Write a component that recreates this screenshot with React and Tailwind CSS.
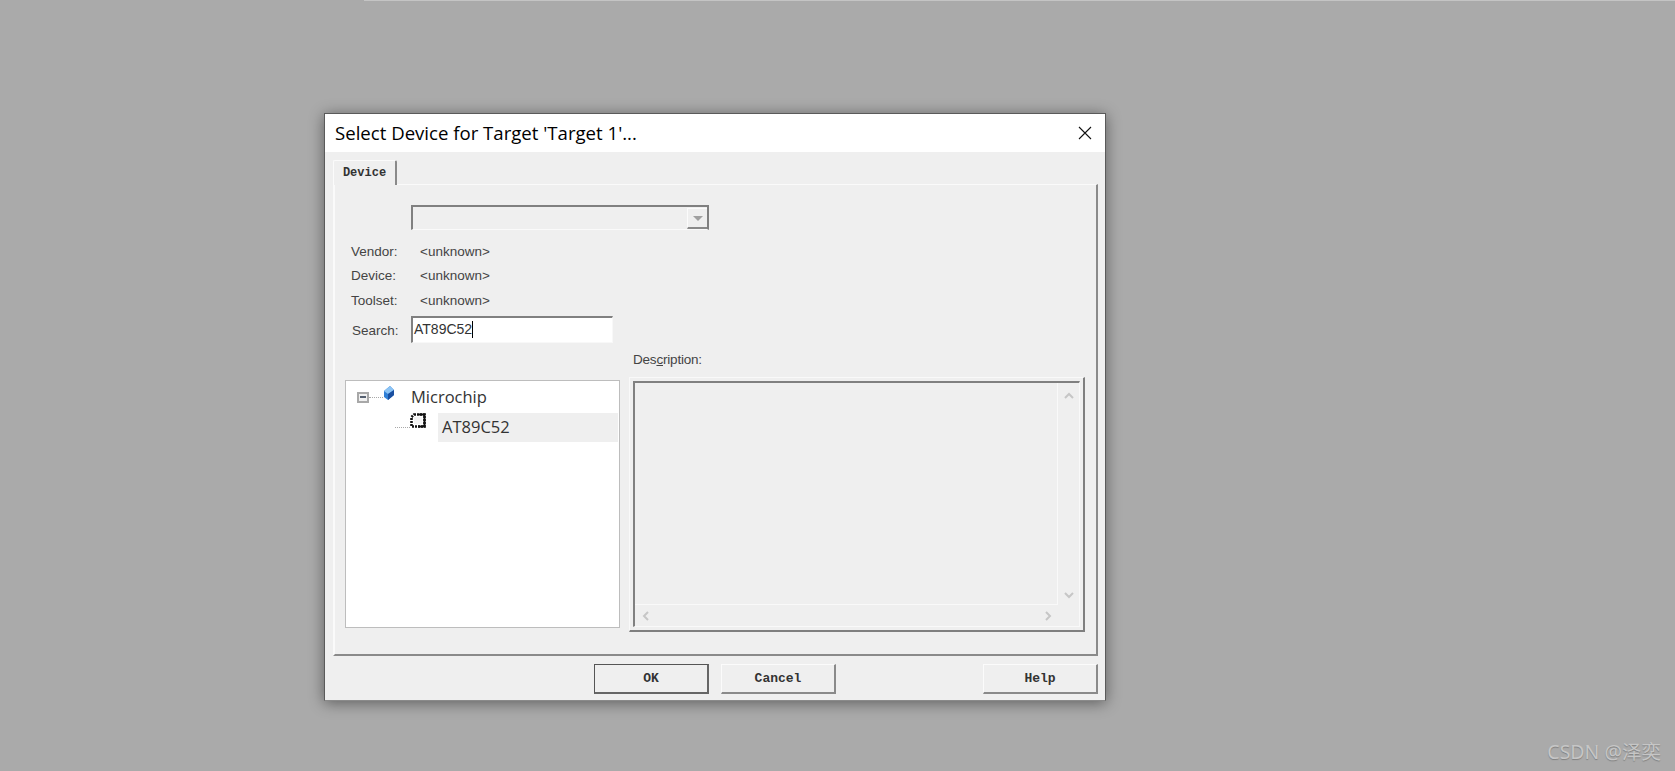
const sans = "font-['Liberation_Sans',Arial,sans-serif]";
const ui = "font-['Open_Sans','Noto_Sans',sans-serif]";
const mono = "font-['Liberation_Mono',monospace]";

function Cube() {
  return (
    <svg width="12" height="15" viewBox="0 0 12 15" className="shrink-0">
      <path d="M7 0 L11 4 L11 9 L5 14 L1 11 L1 5 Z" fill="#2f7fd6" />
      <path d="M7 0 L11 4 L5 8 L1 5 Z" fill="#8cc4f5" />
      <path d="M5 8 L11 4 L11 9 L5 14 Z" fill="#1a4fa0" />
    </svg>
  );
}

function Chip() {
  return (
    <svg width="16" height="15" viewBox="0 0 16 15" className="shrink-0">
      <path d="M4 1.5 H14.5 V13.5 H1.5 V4 Z" fill="#fff" stroke="#111" strokeWidth="2.6" strokeDasharray="2 1" />
      <path d="M9 1.5 H14.5 V13.5 H8" fill="none" stroke="#111" strokeWidth="2" />
      <rect x="4" y="4" width="8" height="7" fill="#f4f4f4" />
    </svg>
  );
}

function Arrow({ d, className }) {
  return (
    <svg width="10" height="10" viewBox="0 0 10 10" className={className}>
      <path d={d} fill="none" stroke="#c6c6c6" strokeWidth="2" />
    </svg>
  );
}

function Dots({ w }) {
  return <div className="h-0 border-t border-dotted border-[#a8a8a8] shrink-0" style={{ width: w }} />;
}

function Row({ label, value, labelClass }) {
  return (
    <div className={`flex items-center h-[24px] pt-px text-[13.5px] ${sans} text-[#444] ${labelClass || ""}`}>
      <span className="w-[85px] pl-[15px] shrink-0">{label}</span>
      <span className="-ml-px">{value}</span>
    </div>
  );
}

function Btn({ children, className }) {
  return (
    <button className={`h-[30px] w-[115px] bg-[#efefef] border-t border-l border-[#fbfbfb] border-r-2 border-b-2 border-r-[#8a8a8a] border-b-[#8a8a8a] text-[13px] font-bold text-[#333] ${mono} ${className || ""}`}>
      {children}
    </button>
  );
}

export default function App() {
  return (
    <div className="relative h-[771px] w-[1675px] overflow-hidden bg-[#aaaaaa] pt-[113px] pl-[324px]">
      <div className="absolute top-0 left-[364px] right-0 h-px bg-[#c4c4c4]" />

      <div className="flex flex-col w-[782px] h-[588px] border border-[#5a5a5a] border-b-[#8a8a8a] bg-[#efefef] shadow-[0_2px_14px_rgba(0,0,0,0.45)]">
        <div className="flex items-center justify-between h-[38px] bg-white pl-[10px] pr-[13px] shrink-0">
          <span className={`text-[18.6px] text-black ${ui}`}>Select Device for Target 'Target 1'...</span>
          <svg width="14" height="14" viewBox="0 0 14 14">
            <path d="M1 1 L13 13 M13 1 L1 13" stroke="#111" strokeWidth="1.1" />
          </svg>
        </div>

        <div className="flex flex-col flex-1 pl-[8px] pr-[7px] pt-[8px]">
          <div className={`relative z-10 -mb-px flex items-center justify-center w-[64px] h-[25px] bg-[#efefef] border-t border-l border-[#fbfbfb] border-r-2 border-r-[#8a8a8a] rounded-t-[2px] text-[12px] font-bold text-[#333] ${mono}`}>
            Device
          </div>

          <div className="flex flex-col h-[472px] border-t border-l-2 border-[#fafafa] border-r-2 border-b-2 border-r-[#8a8a8a] border-b-[#8a8a8a]">
            <div className="ml-[76px] mt-[20px] flex items-end justify-end w-[298px] h-[25px] border-t-2 border-l-2 border-[#808080] border-r-2 border-b border-r-[#808080] border-b-[#fafafa] shrink-0">
              <div className="flex items-center justify-center w-[20px] h-[21px] border-t border-l border-[#fbfbfb] border-b-2 border-b-[#8a8a8a]">
                <div className="w-0 h-0 border-x-[5px] border-x-transparent border-t-[5px] border-t-[#a0a0a0]" />
              </div>
            </div>

            <div className="mt-[10px] ml-[1px]">
              <Row label="Vendor:" value="<unknown>" />
              <Row label="Device:" value="<unknown>" />
              <Row label="Toolset:" value="<unknown>" labelClass="mt-px" />
            </div>

            <div className={`flex items-center mt-[3px] ml-[1px] text-[13.5px] text-[#444] ${sans}`}>
              <span className="w-[75px] pl-[16px] pt-[4px] shrink-0">Search:</span>
              <div className="flex items-center w-[202px] h-[27px] bg-white border-t-2 border-l-2 border-[#808080] border-r border-b border-r-[#f8f8f8] border-b-[#f8f8f8] pl-[1px] pb-[2px]">
                <span className="text-[#333] text-[14px]">AT89C52</span>
                <span className="w-px h-[17px] bg-black" />
              </div>
            </div>

            <div className="flex items-start mt-[9px] ml-[10px]">
              <div className="mt-[28px] flex flex-col w-[275px] h-[248px] bg-white border border-[#bdbdbd] pl-[11px] pr-[1px] shrink-0">
                <div className="flex items-center h-[32px]">
                  <div className="flex items-center justify-center w-[12px] h-[11px] bg-[#f0f0f0] border-2 border-[#a8a8a8] shrink-0">
                    <div className="w-[6px] h-[2px] bg-[#556070]" />
                  </div>
                  <Dots w={14} />
                  <div className="-mt-[8px]"><Cube /></div>
                  <span className={`ml-[16px] text-[16.5px] text-[#333] ${ui}`}>Microchip</span>
                </div>
                <div className="flex items-start h-[29px] ml-[38px]">
                  <div className="mt-[14px]"><Dots w={15} /></div>
                  <Chip />
                  <div className={`ml-[12px] flex items-center flex-1 h-[29px] bg-[#efefef] pl-[4px] text-[16.5px] text-[#333] ${ui}`}>
                    AT89C52
                  </div>
                </div>
              </div>

              <div className="ml-[9px] flex flex-col w-[456px]">
                <div className={`h-[16px] pl-[4px] pt-px flex items-center text-[13.5px] tracking-[-0.2px] text-[#444] ${sans}`}>
                  <span>Des<span className="underline">c</span>ription:</span>
                </div>
                <div className="mt-[9px] h-[255px] p-[3px] border-t border-l border-[#f9f9f9] border-r-2 border-b-2 border-r-[#7f7f7f] border-b-[#7f7f7f]">
                  <div className="h-full grid grid-cols-[1fr_21px] grid-rows-[1fr_21px] border-t-2 border-l-2 border-[#808080] border-r border-b border-r-[#f9f9f9] border-b-[#f9f9f9]">
                    <div className="border-r border-b border-[#f9f9f9]" />
                    <div className="flex flex-col items-center justify-between pt-[8px] pb-[5px]">
                      <Arrow d="M1 7 L5 3 L9 7" />
                      <Arrow d="M1 3 L5 7 L9 3" />
                    </div>
                    <div className="flex items-center justify-between pl-[6px] pr-[5px]">
                      <Arrow d="M7 1 L3 5 L7 9" />
                      <Arrow d="M3 1 L7 5 L3 9" />
                    </div>
                    <div />
                  </div>
                </div>
              </div>
            </div>
          </div>

          <div className="flex items-center mt-[8px]">
            <Btn className="ml-[261px] border-t-[#555] border-l-[#555] border-r-[#666] border-b-[#666]">OK</Btn>
            <Btn className="ml-[12px]">Cancel</Btn>
            <Btn className="ml-auto">Help</Btn>
          </div>
        </div>
      </div>

      <div className={`absolute right-[14px] bottom-[5px] text-[19.5px] text-[#c6c6c6] [text-shadow:0_1px_1px_rgba(0,0,0,0.25)] font-['Noto_Sans','Noto_Sans_CJK_SC',sans-serif]`}>
        CSDN @泽奕
      </div>
    </div>
  );
}
